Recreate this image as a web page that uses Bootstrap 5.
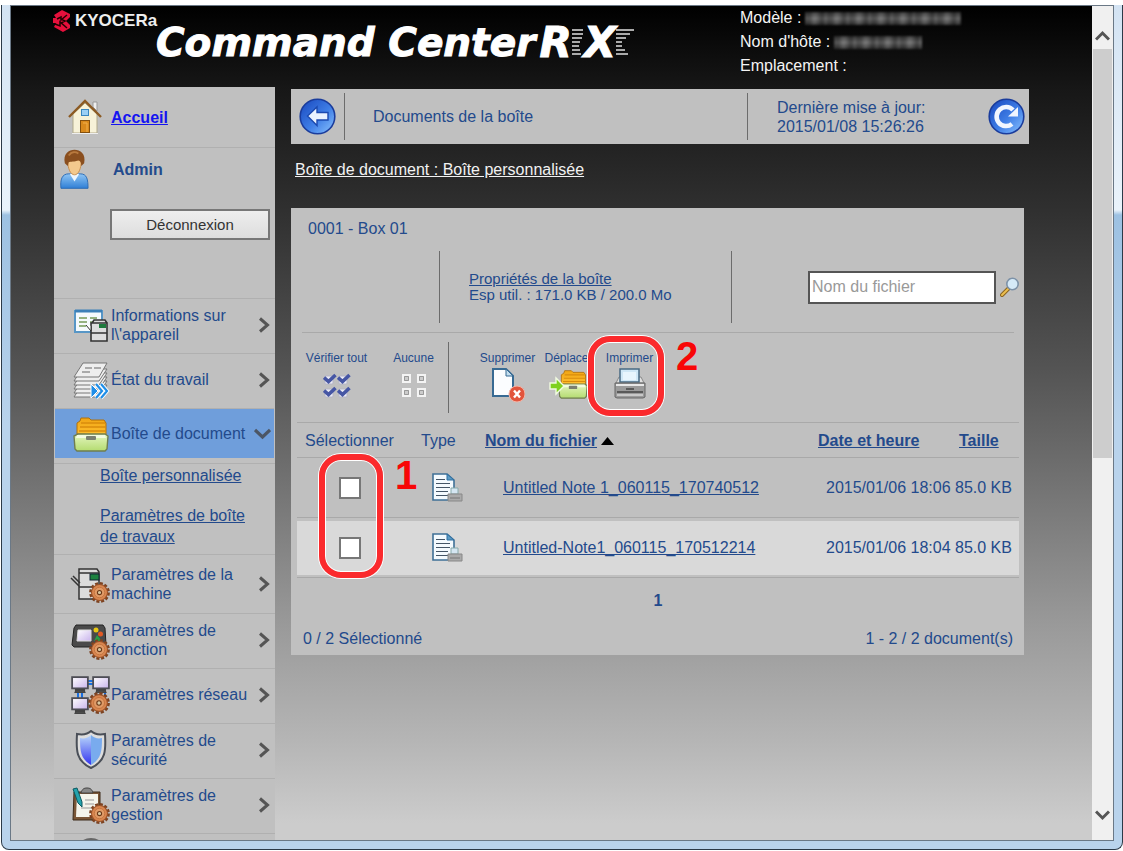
<!DOCTYPE html>
<html lang="fr">
<head>
<meta charset="utf-8">
<meta name="viewport" content="width=device-width, initial-scale=1">
<title>Command Center RX</title>
<link href="https://cdn.jsdelivr.net/npm/bootstrap@5.3.0/dist/css/bootstrap.min.css" rel="stylesheet">
<style>
  :root { --ink: #234a8c; --panel: #c0c0c0; --rule: #a9a9a9; --red: #fb2a2d; }
  body { font: 16px/19px "Liberation Sans", Arial, sans-serif; color: var(--ink); background: #fff; overflow: hidden; }
  a { color: var(--ink); }
  svg { display: block; flex: none; }
  .shell { height: 100vh; padding: 5px 0 1px 1px; }
  .frame { height: 100%; background: linear-gradient(#d3e3f3 0, #eaf3fb 205px, #9dc1e2 210px, #b9d3ec 420px); border: 1px solid #2c3a48; border-top: 0; border-radius: 0 0 8px 8px; padding: 0 8px 8px; }
  .view { height: 100%; border: 1px solid #6a7886; }
  .page-area { background: linear-gradient(#000 0%, #171717 10%, #2f2f2f 24%, #555 44%, #6b6b6b 54%, #999 74%, #b5b5b5 88%, #ccc 98%); overflow: hidden; }
  .scroller { width: 21px; background: #f0f0f0; flex: none; }
  .scroller .thumb { height: 409px; background: #cdcdcd; margin: 0 1px; }
  .scroller button { height: 43px; }
  .bare { border: 0; background: none; padding: 0; color: inherit; }

  .masthead { height: 81px; padding-left: 42px; color: #f4f4f4; }
  .brand { width: 100px; gap: 2px; }
  .brand-name { font: bold 17px/22px "Liberation Sans", sans-serif; color: #eee; }
  .product { font: italic bold 39px/44px "DejaVu Sans", sans-serif; color: #fff; padding-top: 15px; margin-left: 3px; white-space: nowrap; -webkit-text-stroke: 1px #fff; }
  .product .rx { font-size: 42px; }
  .meta { width: 352px; line-height: 24px; }
  .masked { height: 13px; width: 156px; filter: blur(1px); background: linear-gradient(#1118, #8884 50%, #1118), repeating-linear-gradient(92deg, #444 0 5px, #777 9px 11px, #333 17px, #666 22px); }
  .masked.short-mask { width: 88px; }

  .columns { gap: 16px; padding: 0 63px 0 43px; }
  .side { width: 221px; flex: none; background: var(--panel); margin-bottom: -60px; }
  .home { height: 61px; border-bottom: 1px solid #b0b0b0; padding-left: 14px; gap: 9px; }
  .home a { color: #1414f0; }
  .account { height: 150px; padding-left: 6px; }
  .logout { width: 160px; height: 31px; margin: 11px 5px 0 0; border: 2px solid #777; border-radius: 0; background: linear-gradient(#eee, #ddd); color: #333; font-size: 15px; line-height: 19px; padding: 0; }
  .entry { height: 55px; border-top: 1px solid #b0b0b0; color: var(--ink); text-decoration: none; padding: 0 5px 3px 16px; }
  .entry .label { flex: 1; margin-left: 1px; white-space: nowrap; }
  .entry.current { height: 50px; background: #6f9edb; padding: 0 3px 0 15px; margin: 0 1px; }
  .entry.roomy { height: 59px; padding-bottom: 0; }
  .subnav { margin-top: 5px; border-top: 1px solid #b0b0b0; height: 91px; padding: 1px 20px 0 46px; line-height: 21px; }
  .subnav li + li { margin-top: 19px; }

  .topbar { height: 55px; background: var(--panel); margin-top: 2px; padding: 4px 4px 4px 8px; }
  .updated { width: 240px; padding-left: 29px; }
  .vline { width: 1px; background: #6c6c6c; align-self: stretch; flex: none; }
  .crumb { color: #f2f2f2; margin: 16px 4px 0; display: inline-block; }
  .box { background: var(--panel); margin: 29px 5px 0 0; padding: 11px 5px 7px 6px; }
  .box-title { padding-left: 11px; }
  .info { height: 72px; margin: 13px -1px 0 0; font-size: 15px; line-height: 16px; }
  .info .lead-space { width: 142px; }
  .info .usage { width: 291px; padding-left: 29px; }
  .search { width: 188px; height: 33px; border: 2px solid #555; border-radius: 0; padding: 0 2px; font-size: 16px; }
  .search::placeholder { color: #999; opacity: 1; }
  .actions { height: 90px; border-top: 1px solid var(--rule); margin: 9px 5px 0 5px; padding: 9px 0; font-size: 12px; line-height: 14px; }
  .tool { width: 61px; padding-top: 9px; white-space: nowrap; }
  .tool svg { margin: 2px auto 0; }
  .tool .pick { margin-top: 8px; }
  .docs { --bs-table-bg: transparent; --bs-table-color: var(--ink); margin: 0; color: var(--ink); border-top: 1px solid var(--rule); }
  .docs > :not(caption) > * > * { padding: 0; border-bottom: 1px solid var(--rule); white-space: nowrap; vertical-align: middle; color: var(--ink); }
  .docs th { height: 35px; font-weight: normal; }
  .docs td { height: 60px; }
  .docs tr.lit td { background: linear-gradient(#d9d9d9, #d9d9d9) 0 3px / 100% 54px no-repeat; }
  .docs .c-check { width: 124px; padding-right: 18px; }
  .docs .c-type { width: 64px; }
  .docs .c-date { width: 137px; }
  .docs .c-size { width: 64px; }
  .docs td .file { margin-left: 18px; }
  .docs .form-check-input { width: 22px; height: 22px; border: 2px solid #777; border-radius: 0; margin: 0; float: none; vertical-align: middle; }
  .pager { padding-top: 13px; }
  .tally { padding: 19px 6px 0; }
  .callout { position: absolute; border: 6px solid var(--red); border-radius: 22px; box-shadow: 0 0 0 1px #fff, inset 0 0 0 1px #fff; pointer-events: none; }
  .step { position: absolute; font: bold 40px/40px "Liberation Sans", sans-serif; color: #f80606; }
  .mark-rows { left: 22px; top: -4px; width: 64px; height: 124px; }
  .step-one { left: 98px; top: -3px; }
  .mark-print { left: -11px; top: -6px; width: 76px; height: 80px; }
  .step-two { left: 77px; top: -6px; }
</style>
</head>
<body>
<svg width="0" height="0" class="position-absolute" aria-hidden="true">
  <defs>
    <linearGradient id="orb" x1="0" y1="0" x2="1" y2="1"><stop offset="0" stop-color="#1746bd"/><stop offset=".55" stop-color="#3f7ee6"/><stop offset="1" stop-color="#8cc4ff"/></linearGradient>
    <linearGradient id="shirt" x1="0" y1="0" x2="0" y2="1"><stop offset="0" stop-color="#8fc5f4"/><stop offset="1" stop-color="#2f7fd6"/></linearGradient>
    <linearGradient id="gold" x1="0" y1="0" x2="0" y2="1"><stop offset="0" stop-color="#f0a514"/><stop offset="1" stop-color="#ffbf2e"/></linearGradient>
    <linearGradient id="lime" x1="0" y1="0" x2="0" y2="1"><stop offset="0" stop-color="#e4f5c0"/><stop offset="1" stop-color="#b4dc70"/></linearGradient>
    <linearGradient id="screen" x1="0" y1="0" x2="1" y2="1"><stop offset="0" stop-color="#fff"/><stop offset="1" stop-color="#c9b4ec"/></linearGradient>
    <linearGradient id="blueL" x1="0" y1="0" x2="0" y2="1"><stop offset="0" stop-color="#b9d8fb"/><stop offset="1" stop-color="#3434f0"/></linearGradient>
    <symbol id="gear" viewBox="0 0 20 20">
      <circle cx="10" cy="10" r="8.400" fill="none" stroke="#7c4322" stroke-width="3" stroke-dasharray="2.800 1.600"/>
      <circle cx="10" cy="10" r="7.600" fill="#d98650" stroke="#9a5228"/>
      <circle cx="10" cy="10" r="5" fill="#e09a66" stroke="#c0703a" stroke-width=".8"/>
      <circle cx="10" cy="10" r="2" fill="#d8c8a0" stroke="#6b3818"/>
    </symbol>
    <symbol id="right" viewBox="0 0 12 16"><path d="M2 1.500 9.500 8 2 14.500" fill="none" stroke="#555" stroke-width="3"/></symbol>
    <symbol id="drawer" viewBox="0 0 36 36">
      <path d="M4 18V7l3-2 1-3h8l2 2h13l2 3v12z" fill="url(#gold)" stroke="#b0700c"/>
      <path d="M8 7h24M7 11h26M6 15h27" stroke="#d98c0c" stroke-width="1.300" fill="none"/>
      <path d="M5 18h27l3 2-1 13-2 2H4l-2-2-1-13z" fill="url(#lime)" stroke="#6f7d50" stroke-width="1.400"/>
      <path d="M4 19h28l1 3H3z" fill="#f3fbdf"/>
      <rect x="13" y="20" width="10" height="4" rx="1" fill="#7a7f70"/>
    </symbol>
    <symbol id="note" viewBox="0 0 32 30">
      <path d="M2 1h14l7 6v20H2z" fill="#f4fafe" stroke="#3f7096" stroke-width="1.600"/>
      <path d="M16 1v6h7z" fill="#5b9ac4" stroke="#2f6fa0"/>
      <path d="M5 6.500h9M5 10.500h14M5 14.500h14M5 18.500h12M5 22.500h12" stroke="#456"/>
      <path d="M20 15h7v6h-7z" fill="#d5e6f2" stroke="#8aa"/>
      <path d="M17 21h14v7H17z" fill="#aaa" stroke="#888"/><path d="M19 25h10" stroke="#777"/>
    </symbol>
    <symbol id="tick" viewBox="0 0 14 12"><rect x="2" y="3" width="8" height="8" rx="1" fill="#ececf4" stroke="#b4b4c8"/><path d="M1 4.500 5.500 8.500 12.500 2" fill="none" stroke="#4656a4" stroke-width="3.600"/></symbol>
    <symbol id="pc" viewBox="0 0 16 16"><rect x="1" y="1" width="14" height="10" fill="url(#screen)" stroke="#4d4d55" stroke-width="1.600"/><path d="M4 12h8v2H4zM3 14.500h10" fill="#444" stroke="#444"/></symbol>
  </defs>
</svg>

<div class="shell">
 <div class="frame">
  <div class="view d-flex">
   <div class="page-area flex-grow-1">
    <header class="masthead d-flex align-items-start">
      <div class="brand d-flex pt-1 flex-shrink-0">
        <svg width="20" height="22" viewBox="0 0 20 22"><path d="M9 0 17 4v3l-4 4 4 4v3l-7 4-9-5 2-4H0V8h3L1 5z" fill="#e6103c"/><path d="M4 9l4-2v3l6-5M2 14l5 2v-4l7 6M8 9l4 2-4 2" fill="none" stroke="#200" stroke-width="1.500"/></svg>
        <span class="brand-name">KYOCERa</span>
      </div>
      <h1 class="product d-flex mb-0"><span>Command Center</span><span class="rx ms-1">R</span>
        <svg width="12" height="44" viewBox="0 0 12 44"><path d="M0 9h11M0 13h11M0 17h10M0 21h8M-2 25h9M-2 29h10M-1 33h10" stroke="#aaa" stroke-width="2"/></svg><span class="rx">X</span>
        <svg width="18" height="44" viewBox="0 0 18 44"><path d="M-2 9h20M-3 13h17M-4 17h14M-6 21h12M-6 25h12M-4 29h13M-2 33h14" stroke="#aaa" stroke-width="2"/></svg>
      </h1>
      <div class="meta ms-auto flex-shrink-0">
        <div class="d-flex align-items-center gap-1">Modèle : <span class="masked"></span></div>
        <div class="d-flex align-items-center gap-1">Nom d'hôte : <span class="masked short-mask"></span></div>
        <div>Emplacement :</div>
      </div>
    </header>

    <div class="columns d-flex align-items-start">
      <nav class="side">
        <div class="home d-flex align-items-center">
          <svg width="34" height="36" viewBox="0 0 34 36"><path d="M25 3h4v9l-4-4z" fill="#eee" stroke="#999"/><path d="M5 15 17 4l12 11v19H5z" fill="#f7f2d8" stroke="#b0a98a"/><path d="M1 18 17 2l16 16" fill="none" stroke="#8c5a22" stroke-width="2.400"/><rect x="13.500" y="10.500" width="7" height="6" fill="#9cd0f5" stroke="#3a86bf"/><rect x="12.500" y="21.500" width="9" height="12" fill="#d98a1c" stroke="#84500e"/><path d="M15 24h4v9" fill="none" stroke="#f2b04b"/><path d="M4 34.500h26" stroke="#eee"/></svg>
          <a href="#" class="fw-bold">Accueil</a>
        </div>
        <div class="account">
          <div class="d-flex">
            <svg width="29" height="42" viewBox="0 0 30 42"><path d="M1 41c-1-9 1-15 8-15h12c7 0 8 6 8 15z" fill="url(#shirt)" stroke="#2d6cb4"/><path d="M10 26l5 8 5-8" fill="#eef6fd"/><path d="M8 12c0 9 3 15 7 15s7-6 7-15z" fill="#f4c98d" stroke="#c98f4e"/><path d="M5 15C3 5 9 1 15 1s12 4 10 14l-3 3c0-4-1-5-3-6-4 2-8 1-10 2l-1 4z" fill="#8a4f1f"/><path d="M9 7c3-4 7-4 10-2" fill="none" stroke="#b97a3e" stroke-width="2"/></svg>
            <strong class="ms-4 pt-2 mt-1">Admin</strong>
          </div>
          <div class="d-flex justify-content-end mt-2"><button type="button" class="btn logout">Déconnexion</button></div>
        </div>
        <a class="entry d-flex align-items-center" href="#">
          <svg width="40" height="40" viewBox="0 0 40 40"><path d="M5 6h27v21H5z" fill="#f5fafd" stroke="#5796c6" stroke-width="2"/><path d="M5 6h27" stroke="#3c80b8" stroke-width="3"/><path d="M9 13h8m3 0h7M9 17h8m3 0h7M9 21h7" stroke="#759a58" stroke-width="1.500"/><path d="M21 18h16v18H21zM22 18l2-3h11l2 3M21 28h16" fill="#ddd" stroke="#333" stroke-width="1.600"/><path d="M16 20l5 6v-5" fill="#fff" stroke="#333"/><rect x="29" y="19" width="7" height="4" fill="#1e7a3c"/></svg>
          <span class="label">Informations sur<br>l\'appareil</span><svg width="12" height="16"><use href="#right"/></svg>
        </a>
        <a class="entry d-flex align-items-center" href="#">
          <svg width="40" height="40" viewBox="0 0 40 40"><g fill="#eee" stroke="#777"><path d="M4 37h25l8-12H12z"/><path d="M4 33h25l8-12H12z"/><path d="M4 29h25l8-12H12z"/><path d="M4 25h25l8-12H12z"/><path d="M4 21h25l8-12H12z"/><path d="M4 17h25l8-14H13z"/></g><path d="M15 8h7m2 0h7M12 12h8" stroke="#aaa" stroke-width="2"/><path d="M21 24l7 7-7 7z" fill="#1f8ee8" stroke="#fff"/><path d="M26 24l6 7-6 7M31 24l6 7-6 7" fill="none" stroke="#fff" stroke-width="4"/><path d="M26 24l6 7-6 7M31 24l6 7-6 7" fill="none" stroke="#1f8ee8" stroke-width="2.200"/></svg>
          <span class="label">État du travail</span><svg width="12" height="16"><use href="#right"/></svg>
        </a>
        <a class="entry current d-flex align-items-center" href="#">
          <svg width="40" height="38" viewBox="0 0 40 38"><use href="#drawer" x="3" y="1" width="36" height="36"/></svg>
          <span class="label">Boîte de document</span><svg width="17" height="12" viewBox="0 0 17 12"><path d="M1 2l7.500 7L16 2" fill="none" stroke="#4c5665" stroke-width="3.200"/></svg>
        </a>
        <ul class="subnav list-unstyled mb-0">
          <li><a href="#">Boîte personnalisée</a></li>
          <li><a href="#">Paramètres de boîte<br>de travaux</a></li>
        </ul>
        <a class="entry roomy d-flex align-items-center" href="#">
          <svg width="40" height="40" viewBox="0 0 40 40"><path d="M9 5h18l2 3v27H9z" fill="#dcdcdc" stroke="#333" stroke-width="1.500"/><path d="M9 9h20M9 23h20M1 14l8 8M3 12l7 7" stroke="#333" stroke-width="1.500"/><rect x="20" y="10" width="9" height="6" fill="#1d8240" stroke="#123"/><use href="#gear" x="19" y="18" width="21" height="21"/></svg>
          <span class="label">Paramètres de la<br>machine</span><svg width="12" height="16"><use href="#right"/></svg>
        </a>
        <a class="entry d-flex align-items-center" href="#">
          <svg width="40" height="40" viewBox="0 0 40 40"><path d="M6 5h27l2 3 1 17-2 2H4l-2-2L4 8z" fill="#4a4a4a" stroke="#222"/><path d="M8 10h13v11H7z" fill="url(#screen)" stroke="#ddd"/><circle cx="26" cy="10" r="2.500" fill="#e8c713"/><circle cx="30.500" cy="14" r="2.500" fill="#e35a24"/><path d="M27 15l5 6h-8z" fill="#29a046"/><use href="#gear" x="19" y="19" width="21" height="21"/></svg>
          <span class="label">Paramètres de<br>fonction</span><svg width="12" height="16"><use href="#right"/></svg>
        </a>
        <a class="entry d-flex align-items-center" href="#">
          <svg width="40" height="40" viewBox="0 0 40 40"><path d="M17 6h8M17 9h8M8 17v8M12 17v8M31 17v8M35 17v8" stroke="#1a6fe0" stroke-width="2"/><use href="#pc" x="1" y="1" width="18" height="18"/><use href="#pc" x="22" y="1" width="18" height="18"/><use href="#pc" x="1" y="22" width="18" height="18"/><use href="#gear" x="18" y="17" width="22" height="22"/></svg>
          <span class="label">Paramètres réseau</span><svg width="12" height="16"><use href="#right"/></svg>
        </a>
        <a class="entry d-flex align-items-center" href="#">
          <svg width="40" height="40" viewBox="0 0 40 40"><path d="M21 1c3 3 8 4 14 3 1 16 1 27-14 34C6 31 6 20 7 4c6 1 11 0 14-3z" fill="#ddd" stroke="#4a4f58" stroke-width="2"/><path d="M21 5c-3 3-7 4-11 3 0 14 1 21 11 27z" fill="url(#blueL)"/><path d="M21 5c3 3 7 4 11 3 0 14-1 21-11 27z" fill="#79abee"/></svg>
          <span class="label">Paramètres de<br>sécurité</span><svg width="12" height="16"><use href="#right"/></svg>
        </a>
        <a class="entry d-flex align-items-center" href="#">
          <svg width="40" height="40" viewBox="0 0 40 40"><path d="M4 7h26v28H3z" fill="#7a5637" stroke="#3c2a1a"/><path d="M7 9h21v23H6z" fill="#f4f4ec"/><path d="M11 8c1-4 3-5 6-5s5 1 6 5z" fill="#888" stroke="#444"/><path d="M15 15h9M15 19h9M11 23h10" stroke="#999"/><path d="M3 4l4-1 5 14v5l-4-4z" fill="#24a3ad" stroke="#0d5960"/><use href="#gear" x="19" y="18" width="21" height="21"/></svg>
          <span class="label">Paramètres de<br>gestion</span><svg width="12" height="16"><use href="#right"/></svg>
        </a>
        <a class="entry d-flex align-items-start" href="#" aria-label="Liens">
          <svg width="40" height="44" viewBox="0 0 40 44"><circle cx="21" cy="20" r="15" fill="#8ab" stroke="#666" stroke-width="2"/></svg>
        </a>
      </nav>

      <main class="flex-grow-1">
        <div class="topbar d-flex align-items-center">
          <button type="button" class="bare" aria-label="Retour"><svg width="37" height="37" viewBox="0 0 37 37"><circle cx="18.500" cy="18.500" r="17.300" fill="url(#orb)" stroke="#1a3c9c" stroke-width="1.600"/><path d="M8.500 18 18 9v5.500h11v7.500H18v5.500z" fill="#e9f2ff" stroke="#1b49b0" stroke-width="1.400"/></svg></button>
          <span class="vline ms-2 me-4"></span>
          <span class="flex-grow-1 ms-1">Documents de la boîte</span>
          <span class="vline"></span>
          <span class="updated">Dernière mise à jour:<br>2015/01/08 15:26:26</span>
          <button type="button" class="bare" aria-label="Actualiser"><svg width="37" height="37" viewBox="0 0 37 37"><circle cx="18.500" cy="18.500" r="17.300" fill="url(#orb)" stroke="#1a3c9c" stroke-width="1.600"/><path d="M24 26A9.500 9.500 0 1 1 25 12" fill="none" stroke="#f1f6ff" stroke-width="4.600"/><path d="M30 9v9.500H20z" fill="#f1f6ff"/></svg></button>
        </div>
        <a href="#" class="crumb">Boîte de document : Boîte personnalisée</a>

        <section class="box">
          <div class="box-title">0001 - Box 01</div>
          <div class="info d-flex">
            <div class="lead-space"></div><span class="vline"></span>
            <div class="usage align-self-center"><a href="#">Propriétés de la boîte</a><br>Esp util. : 171.0 KB / 200.0 Mo</div>
            <span class="vline"></span>
            <div class="flex-grow-1 d-flex align-items-center justify-content-end">
              <input type="text" class="search" placeholder="Nom du fichier" aria-label="Nom du fichier">
              <button type="button" class="bare ms-1" aria-label="Rechercher"><svg width="20" height="20" viewBox="0 0 20 20"><path d="M2 18l7-7" stroke="#8a6420" stroke-width="4" stroke-linecap="round"/><path d="M2 18l6-6" stroke="#ecc050" stroke-width="2" stroke-linecap="round"/><circle cx="12.500" cy="7" r="5.700" fill="#d5eaf8" stroke="#7d92a8" stroke-width="1.600"/></svg></button>
            </div>
          </div>

          <div class="actions d-flex">
            <button type="button" class="bare tool d-flex flex-column align-items-center justify-content-start ms-1 me-3">Vérifier tout<svg class="pick" width="28" height="26" viewBox="0 0 28 26"><use href="#tick" width="14" height="12"/><use href="#tick" x="14" width="14" height="12"/><use href="#tick" y="13" width="14" height="12"/><use href="#tick" x="14" y="13" width="14" height="12"/></svg></button>
            <button type="button" class="bare tool d-flex flex-column align-items-center justify-content-start me-1">Aucune<svg class="pick" width="26" height="26" viewBox="0 0 26 26"><g fill="#ccc" stroke="#f4f4f4" stroke-width="2"><path d="M2 2h7v7H2zM17 2h7v7h-7zM2 16h7v7H2zM17 16h7v7h-7z"/></g><path d="M3.500 3.500h4v4h-4zM18.500 3.500h4v4h-4zM3.500 17.500h4v4h-4zM18.500 17.500h4v4h-4z" fill="none" stroke="#999"/></svg></button>
            <span class="vline me-4"></span>
            <button type="button" class="bare tool d-flex flex-column align-items-center justify-content-start ms-1">Supprimer<svg width="34" height="36" viewBox="0 0 34 36"><path d="M2 2h13l7 7v20H2z" fill="#fbfdff" stroke="#376a93" stroke-width="2"/><path d="M15 2v7h7z" fill="#c3deef" stroke="#376a93"/><circle cx="26" cy="27" r="8" fill="#e2543c" stroke="#f3b5a7"/><path d="M23 23.500l6 7M29 23.500l-6 7" stroke="#fff" stroke-width="2.400"/></svg></button>
            <button type="button" class="bare tool d-flex flex-column align-items-center justify-content-start">Déplacer<svg width="40" height="34" viewBox="0 0 40 34"><use href="#drawer" x="9" y="2" width="30" height="30"/><path d="M1 16h6v-5l8 8-8 8v-5H1z" fill="#7fd11f" stroke="#f1fbe0" stroke-width="1.400"/></svg></button>
            <div class="position-relative">
              <button type="button" class="bare tool d-flex flex-column align-items-center justify-content-start">Imprimer<svg width="34" height="34" viewBox="0 0 34 34"><path d="M3 16l3-6h22l3 6z" fill="#e0e0e0" stroke="#888"/><path d="M7 2h19v13H7z" fill="#cfe7f6" stroke="#486a83" stroke-width="1.500"/><path d="M10 5h13v8H10z" fill="#e8f5fd"/><path d="M2 16h30v14l-2 1H4l-2-1z" fill="#9a9a9a" stroke="#666"/><path d="M3 18h28" stroke="#e8e8e8" stroke-width="2"/><path d="M4 25h26M13 22h8" stroke="#444" stroke-width="1.600"/><path d="M4 28h26" stroke="#c8c8c8" stroke-width="2"/></svg></button>
              <span class="callout mark-print"></span><span class="step step-two">2</span>
            </div>
          </div>

          <table class="table docs">
            <thead>
              <tr>
                <th class="c-check ps-2" scope="col">Sélectionner</th><th class="c-type" scope="col">Type</th>
                <th scope="col"><a href="#" class="fw-bold">Nom du fichier</a> <svg class="d-inline" width="13" height="8" viewBox="0 0 13 8"><path d="M0 8 6.500 0 13 8z" fill="#000"/></svg></th>
                <th class="c-date" scope="col"><a href="#" class="fw-bold">Date et heure</a></th><th class="c-size" scope="col"><a href="#" class="fw-bold ms-1">Taille</a></th>
              </tr>
            </thead>
            <tbody>
              <tr>
                <td class="c-check text-center position-relative"><input class="form-check-input" type="checkbox" aria-label="Untitled Note 1_060115_170740512">
                  <span class="callout mark-rows"></span><span class="step step-one">1</span></td>
                <td><svg class="ms-2" width="36" height="30" viewBox="0 0 36 30"><use href="#note" x="2" width="32" height="30"/></svg></td>
                <td><a href="#" class="file">Untitled Note 1_060115_170740512</a></td>
                <td class="ps-2">2015/01/06 18:06</td><td>85.0 KB</td>
              </tr>
              <tr class="lit">
                <td class="c-check text-center"><input class="form-check-input" type="checkbox" aria-label="Untitled-Note1_060115_170512214"></td>
                <td><svg class="ms-2" width="36" height="30" viewBox="0 0 36 30"><use href="#note" x="2" width="32" height="30"/></svg></td>
                <td><a href="#" class="file">Untitled-Note1_060115_170512214</a></td>
                <td class="ps-2">2015/01/06 18:04</td><td>85.0 KB</td>
              </tr>
            </tbody>
          </table>
          <div class="pager text-center fw-bold">1</div>
          <div class="tally d-flex justify-content-between">
            <span>0 / 2 Sélectionné</span><span>1 - 2 / 2 document(s)</span>
          </div>
        </section>
      </main>
    </div>
   </div>
   <div class="scroller d-flex flex-column">
     <button type="button" class="bare d-flex align-items-center justify-content-center pt-3" aria-label="Haut"><svg width="15" height="12" viewBox="0 0 15 12"><path d="M1 9.500 7.500 3 14 9.500" fill="none" stroke="#555" stroke-width="3"/></svg></button>
     <div class="thumb"></div>
     <button type="button" class="bare d-flex align-items-center justify-content-center mt-auto pb-2" aria-label="Bas"><svg width="15" height="12" viewBox="0 0 15 12"><path d="M1 2.500 7.500 9 14 2.500" fill="none" stroke="#555" stroke-width="3"/></svg></button>
   </div>
  </div>
 </div>
</div>
<script src="https://cdn.jsdelivr.net/npm/bootstrap@5.3.0/dist/js/bootstrap.bundle.min.js"></script>
</body>
</html>
